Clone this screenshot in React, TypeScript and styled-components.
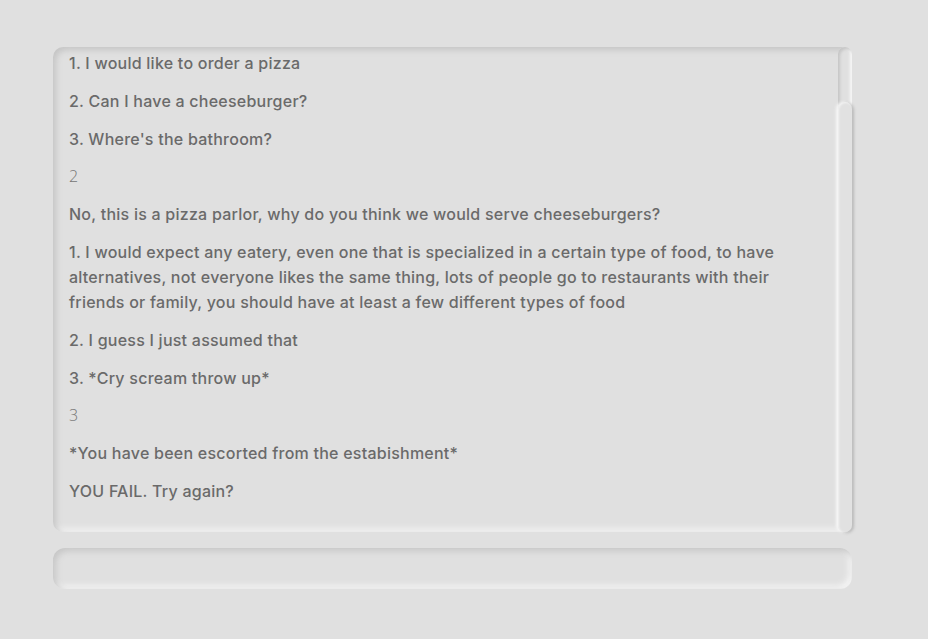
import React, { useCallback, useLayoutEffect, useRef, useState } from "react";
import styled, { createGlobalStyle } from "styled-components";

const GlobalStyle = createGlobalStyle`
  html, body { margin: 0; padding: 0; background: #e0e0e0; }
  body { font-family: "Inter", "Noto Sans", sans-serif; }
`;

const Page = styled.main`
  min-height: 639px;
  padding: 47px 0 0 53px;
  box-sizing: border-box;
  background: #e0e0e0;
  display: flex;
  flex-direction: column;
  gap: 16px;
`;

const Panel = styled.section`
  display: flex;
  width: 799px;
  height: 485px;
  border-radius: 10px;
  background: #e0e0e0;
  box-shadow: inset 3px 3px 6px #c4c4c4, inset -3px -3px 6px #f6f6f6;
`;

const Scroller = styled.div`
  flex: 1;
  min-width: 0;
  overflow-y: auto;
  scrollbar-width: none;
  padding: 66px 40px 15px 16px;
  &::-webkit-scrollbar { display: none; }
`;

const Rail = styled.div`
  flex: 0 0 14px;
  display: flex;
  flex-direction: column;
  border-radius: 7px;
  background: #e0e0e0;
  box-shadow: inset 2px 2px 3px #c6c6c6, inset -2px -1px 3px #f9f9f9;
`;

const Thumb = styled.div`
  flex: none;
  border-radius: 7px;
  background: #e1e1e1;
  box-shadow: -2px 0 3px #f7f7f7, 2px 1px 3px #b9b9b9, inset 1px 1px 2px #f2f2f2;
`;

const Line = styled.p<{ $round?: boolean }>`
  margin: 0 0 12.8px;
  font-family: ${(p) => (p.$round ? '"Open Sans", sans-serif' : '"Inter", "Noto Sans", sans-serif')};
  font-size: 16px;
  font-weight: ${(p) => (p.$round ? 300 : 500)};
  letter-spacing: ${(p) => (p.$round ? "0" : "0.24px")};
  line-height: 25px;
  color: ${(p) => (p.$round ? "#767676" : "#6a6a6a")};
`;

const Input = styled.div`
  width: 799px;
  height: 41px;
  border-radius: 12px;
  background: #e0e0e0;
  box-shadow: inset 3px 3px 6px #c6c6c6, inset -3px -3px 6px #f7f7f7;
`;

const lines: { text: string; round?: boolean }[] = [
  { text: "1. I would like to order a pizza" },
  { text: "2. Can I have a cheeseburger?" },
  { text: "3. Where's the bathroom?" },
  { text: "2", round: true },
  { text: "No, this is a pizza parlor, why do you think we would serve cheeseburgers?" },
  {
    text:
      "1. I would expect any eatery, even one that is specialized in a certain type of food, to have alternatives, not everyone likes the same thing, lots of people go to restaurants with their friends or family, you should have at least a few different types of food",
  },
  { text: "2. I guess I just assumed that" },
  { text: "3. *Cry scream throw up*" },
  { text: "3", round: true },
  { text: "*You have been escorted from the estabishment*" },
  { text: "YOU FAIL. Try again?" },
];

export default function App() {
  const ref = useRef<HTMLDivElement>(null);
  const [bar, setBar] = useState({ top: 0, size: 485 });

  const measure = useCallback(() => {
    const el = ref.current;
    if (!el) return;
    const track = el.clientHeight;
    const size = (track * el.clientHeight) / el.scrollHeight;
    const max = el.scrollHeight - el.clientHeight;
    const top = max > 0 ? ((track - size) * el.scrollTop) / max : 0;
    setBar({ top, size });
  }, []);

  useLayoutEffect(() => {
    const el = ref.current;
    if (el) el.scrollTop = el.scrollHeight;
    measure();
  }, [measure]);

  return (
    <>
      <GlobalStyle />
      <Page>
        <Panel>
          <Scroller ref={ref} onScroll={measure}>
            {lines.map((l, i) => (
              <Line key={i} $round={l.round}>
                {l.text}
              </Line>
            ))}
          </Scroller>
          <Rail>
            <Thumb style={{ marginTop: bar.top, height: bar.size }} />
          </Rail>
        </Panel>
        <Input />
      </Page>
    </>
  );
}
